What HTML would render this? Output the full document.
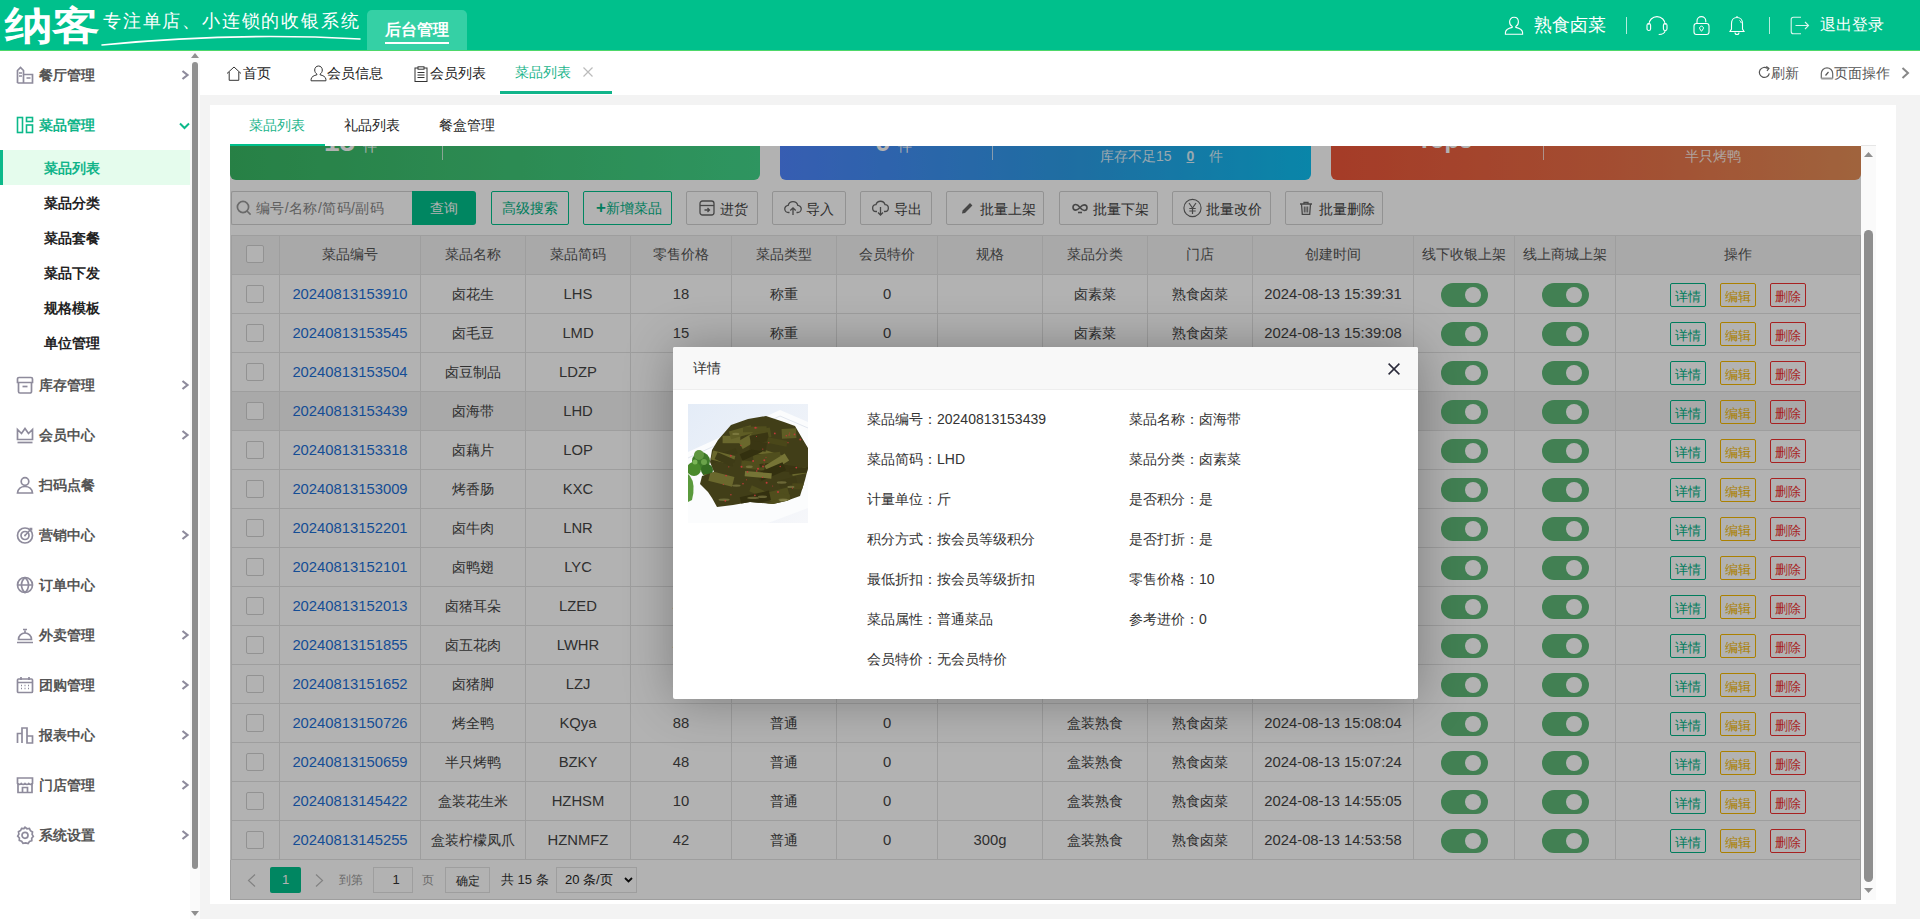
<!DOCTYPE html>
<html><head><meta charset="utf-8"><title>菜品列表</title><style>
*{box-sizing:border-box;margin:0;padding:0}
html,body{width:1920px;height:919px;overflow:hidden}
body{font-family:"Liberation Sans",sans-serif;background:#f3f3f3;position:relative;font-size:14px;color:#333}
.a{position:absolute}
svg{display:block;overflow:visible}
/* header */
#hdr{left:0;top:0;width:1920px;height:51px;background:#00c08c;border-bottom:1px solid #4ed86a}
#logo{left:5px;top:5px;font-size:42px;font-weight:900;color:#fff;letter-spacing:-1px;transform-origin:0 0;transform:scale(1.14,0.93);line-height:46px;white-space:nowrap}
#slogan{left:103px;top:9px;font-family:"Liberation Serif",serif;font-size:18px;color:#fff;letter-spacing:1.8px;white-space:nowrap;line-height:24px}
#htab{left:367px;top:10px;width:100px;height:40px;background:#35d0a5;border-radius:5px 5px 0 0}
#htab span{position:absolute;left:18px;top:10px;font-size:16px;font-weight:bold;color:#fff;line-height:20px;white-space:nowrap}
#htab i{position:absolute;left:18px;top:32px;width:64px;height:2px;background:#fff}
.ht{color:#fff;white-space:nowrap;line-height:20px}
.hsep{width:1px;height:17px;background:rgba(255,255,255,.7);top:17px}
/* sidebar */
#side{left:0;top:51px;width:190px;height:868px;background:#fff}
#strack{left:190px;top:51px;width:10px;height:868px;background:#fafafa}
#sthumb{left:192px;top:62px;width:6px;height:807px;background:#8f8f8f;border-radius:3px}
.mi{left:0;width:190px;height:50px}
.mi .ic{position:absolute;left:16px;top:16px;width:18px;height:18px}
.mi .tx{position:absolute;left:39px;top:15px;font-size:14px;font-weight:bold;color:#555;line-height:20px;white-space:nowrap}
.mi .ar{position:absolute;left:181px;top:20px;width:8px;height:10px}
.si{left:0;width:190px;height:35px}
.si .tx{position:absolute;left:44px;top:8px;font-size:14px;font-weight:bold;color:#222;line-height:20px;white-space:nowrap}
.si.on{background:#e5fced;border-left:3px solid #0cb98a}
.si.on .tx{color:#10b489;left:41px}
/* tabbar */
#tabbar{left:200px;top:51px;width:1720px;height:44px;background:#fff}
.tb1{top:63px;font-size:14px;color:#222;line-height:20px;white-space:nowrap}
/* panel */
#panel{left:210px;top:105px;width:1686px;height:799px;background:#fff}
.st{top:115px;font-size:14px;color:#222;line-height:20px;white-space:nowrap}
/* iframe */
#ifr{left:230px;top:146px;width:1646px;height:754px;background:#fff;overflow:hidden}
#rtrack{left:1631px;top:0;width:15px;height:755px;background:#fafafa}
#rthumb{left:1634px;top:85px;width:9px;height:652px;background:#8f8f8f;border-radius:5px}
.card{top:-120px;height:155px;border-radius:0 0 6px 6px;color:#fff}
.btn{top:46px;height:34px;border:1px solid #d2d2d2;background:#fff;border-radius:2px;font-size:14px;color:#555;line-height:32px;white-space:nowrap}
/* table */
.tb{position:absolute;left:1px;top:90px;border-collapse:collapse;table-layout:fixed;width:1629px}
.tb th,.tb td{border:1px solid #e2e2e2;height:39px;text-align:center;font-size:14px;color:#555;font-weight:normal;white-space:nowrap;overflow:hidden}
.tb th{background:#f2f2f2;color:#555}
.tb td{color:#444;font-size:14px;padding-top:1px}
.tb td.n,.tb td.lk,.tb td.tm{font-size:14.8px;padding-top:0}
.tb td.lk{color:#1d6fd6}
.tb tr.hov td{background:#f2f2f2}
.tb td.sc{padding:1px 0 0}
.cb{display:inline-block;width:18px;height:18px;margin-left:-2px;position:relative;top:-1px;border:1px solid #d2d2d2;background:#fff;border-radius:2px;vertical-align:middle}
.sw{display:inline-block;width:47px;height:24px;border-radius:12px;background:#5fb878;position:relative;vertical-align:middle}
.sw:after{content:"";position:absolute;right:7px;top:4px;width:16px;height:16px;border-radius:50%;background:#fff}
.op b{display:inline-block;width:36px;height:24px;border:1px solid;border-radius:2px;font-weight:normal;font-size:13px;line-height:25px;margin:0 7px;vertical-align:middle}
.bd{color:#00b386;border-color:#00c08b}
.be{color:#f5b800;border-color:#ffc200}
.bx{color:#f03030;border-color:#ff3a3a}
#pager{left:0;top:715px;width:1631px;height:40px;border:1px solid #e2e2e2;border-top:0}
#shade{left:0;top:0;width:1631px;height:755px;background:rgba(0,0,0,.3)}
/* modal */
#modal{left:673px;top:347px;width:745px;height:352px;background:#fff;border-radius:2px;box-shadow:1px 1px 50px rgba(0,0,0,.3)}
#mtitle{left:0;top:0;width:745px;height:43px;background:#f8f8f8;border-bottom:1px solid #eee;border-radius:2px 2px 0 0}
.dl{font-size:14px;color:#333;line-height:20px;white-space:nowrap}

</style></head><body>
<div id="hdr" class="a">
  <div id="logo" class="a">纳客</div>
  <div id="slogan" class="a">专注单店、小连锁的收银系统</div>
  <svg class="a" style="left:102px;top:34px" width="260" height="14"><path d="M0 11 Q 130 -2 258 5" stroke="#fff" stroke-width="1.6" fill="none" stroke-linecap="round"/></svg>
  <div id="htab" class="a"><span>后台管理</span><i></i></div>
  <svg class="a" style="left:1504px;top:16px" width="20" height="19" viewBox="0 0 20 19"><path d="M10 1.2c2.6 0 4.4 2 4.4 4.6 0 2.2-1.2 4-2.6 4.7l0 .9c3.3.7 6.6 2.4 6.8 5.2v1.6H1.4v-1.6c.2-2.8 3.5-4.5 6.8-5.2v-.9C6.8 9.8 5.6 8 5.6 5.8 5.6 3.2 7.4 1.2 10 1.2z" fill="none" stroke="#fff" stroke-width="1.1"/></svg>
  <div class="a ht" style="left:1534px;top:15px;font-size:18px">熟食卤菜</div>
  <div class="a hsep" style="left:1626px"></div>
  <svg class="a" style="left:1646px;top:16px" width="22" height="20" viewBox="0 0 22 20"><path d="M2.8 9V8.8a8.2 8.2 0 0 1 16.4 0V9" fill="none" stroke="#fff" stroke-width="1.1"/><rect x="1" y="7.5" width="3.6" height="7" rx="1.8" fill="none" stroke="#fff" stroke-width="1.1"/><rect x="17.4" y="7.5" width="3.6" height="7" rx="1.8" fill="none" stroke="#fff" stroke-width="1.1"/><path d="M19.2 14.5c-.4 2.6-2.6 4-6.5 4" fill="none" stroke="#fff" stroke-width="1.1"/></svg>
  <svg class="a" style="left:1693px;top:15px" width="17" height="21" viewBox="0 0 17 21"><path d="M4 8.5V6a4.4 4.4 0 0 1 8.8 0v1.3" fill="none" stroke="#fff" stroke-width="1.1"/><rect x="1" y="8.5" width="15" height="11" rx="2.4" fill="none" stroke="#fff" stroke-width="1.1"/><path d="M8.5 16.3l-1.7-2.4a1.9 1.9 0 1 1 3.4 0z" fill="none" stroke="#fff" stroke-width="1"/></svg>
  <svg class="a" style="left:1729px;top:15px" width="16" height="21" viewBox="0 0 16 21"><path d="M8 1v1.5M8 2.5c-3.2 0-5.5 2.6-5.5 6v5.5L1 16.5h14l-1.5-2.5V8.5c0-3.4-2.3-6-5.5-6zM6 17.5a2 2 0 0 0 4 0" fill="none" stroke="#fff" stroke-width="1.1"/><path d="M10.5 5.5c1 .6 1.6 1.6 1.8 2.6" fill="none" stroke="#fff" stroke-width="1"/></svg>
  <div class="a hsep" style="left:1769px"></div>
  <svg class="a" style="left:1790px;top:16px" width="20" height="19" viewBox="0 0 20 19"><path d="M11 1.2H3.5A2.3 2.3 0 0 0 1.2 3.5v12a2.3 2.3 0 0 0 2.3 2.3H11M5.5 9.5h13M15 6l3.5 3.5L15 13" fill="none" stroke="#fff" stroke-width="1.1" opacity=".85"/></svg>
  <div class="a ht" style="left:1820px;top:15px;font-size:16px">退出登录</div>
</div>

<!-- sidebar -->
<div id="side" class="a"></div>
<div id="strack" class="a"></div>
<svg class="a" style="left:191px;top:53px" width="8" height="5"><path d="M0 5L4 0L8 5z" fill="#8f8f8f"/></svg>
<div id="sthumb" class="a"></div>
<svg class="a" style="left:191px;top:911px" width="8" height="5"><path d="M0 0L4 5L8 0z" fill="#8f8f8f"/></svg>

<div class="a mi" style="top:50px"><svg class="ic" width="18" height="18" viewBox="0 0 18 18"><path d="M1.5 17V4.5L4.5 1.5 7.5 4.5V17" fill="none" stroke="#8e8b9c" stroke-width="1.7"/><path d="M7.5 8.5h9v8.5h-15" fill="none" stroke="#8e8b9c" stroke-width="1.7"/><path d="M3 7h3M3 10h3M10.5 12h4" fill="none" stroke="#8e8b9c" stroke-width="1.7"/></svg><span class="tx">餐厅管理</span><svg class="ar" width="8" height="10" viewBox="0 0 8 10"><path d="M1.5 1l5 4-5 4" fill="none" stroke="#8e8b9c" stroke-width="2.2"/></svg></div>
<div class="a mi" style="top:100px"><svg class="ic" width="18" height="18" viewBox="0 0 18 18"><rect x="1.5" y="1.5" width="5" height="15" stroke="#0cb98a" stroke-width="1.6" fill="none"/><rect x="10.5" y="1.5" width="6" height="4" stroke="#0cb98a" stroke-width="1.6" fill="none"/><rect x="10.5" y="9" width="6" height="7.5" stroke="#0cb98a" stroke-width="1.6" fill="none"/></svg><span class="tx" style="color:#10b489">菜品管理</span></div>
<svg class="a" style="left:179px;top:122px" width="11" height="8" viewBox="0 0 11 8"><path d="M1 1.5l4.5 4.5 4.5-4.5" fill="none" stroke="#0cb98a" stroke-width="2"/></svg>
<div class="a si on" style="top:150px"><span class="tx">菜品列表</span></div>
<div class="a si" style="top:185px"><span class="tx">菜品分类</span></div>
<div class="a si" style="top:220px"><span class="tx">菜品套餐</span></div>
<div class="a si" style="top:255px"><span class="tx">菜品下发</span></div>
<div class="a si" style="top:290px"><span class="tx">规格模板</span></div>
<div class="a si" style="top:325px"><span class="tx">单位管理</span></div>
<div class="a mi" style="top:360px"><svg class="ic" width="18" height="18" viewBox="0 0 18 18"><path d="M2.5 6.5v9a1.5 1.5 0 0 0 1.5 1.5h10a1.5 1.5 0 0 0 1.5-1.5v-9M1.5 6.5h15V3a1.5 1.5 0 0 0-1.5-1.5H3A1.5 1.5 0 0 0 1.5 3z" fill="none" stroke="#8e8b9c" stroke-width="1.7"/><path d="M6.5 10.5h5" fill="none" stroke="#8e8b9c" stroke-width="1.7"/></svg><span class="tx">库存管理</span><svg class="ar" width="8" height="10" viewBox="0 0 8 10"><path d="M1.5 1l5 4-5 4" fill="none" stroke="#8e8b9c" stroke-width="2.2"/></svg></div>
<div class="a mi" style="top:410px"><svg class="ic" width="18" height="18" viewBox="0 0 18 18"><path d="M1.5 13.5V3.5l4 4 3.5-5 3.5 5 4-4v10z" fill="none" stroke="#8e8b9c" stroke-width="1.7"/><path d="M1.5 16.5h15" fill="none" stroke="#8e8b9c" stroke-width="1.7"/></svg><span class="tx">会员中心</span><svg class="ar" width="8" height="10" viewBox="0 0 8 10"><path d="M1.5 1l5 4-5 4" fill="none" stroke="#8e8b9c" stroke-width="2.2"/></svg></div>
<div class="a mi" style="top:460px"><svg class="ic" width="18" height="18" viewBox="0 0 18 18"><circle cx="9" cy="5.5" r="3.8" fill="none" stroke="#8e8b9c" stroke-width="1.7"/><path d="M1.5 17c.4-4 3.5-6.5 7.5-6.5s7.1 2.5 7.5 6.5z" fill="none" stroke="#8e8b9c" stroke-width="1.7"/></svg><span class="tx">扫码点餐</span></div>
<div class="a mi" style="top:510px"><svg class="ic" width="18" height="18" viewBox="0 0 18 18"><circle cx="9" cy="9.5" r="7.5" fill="none" stroke="#8e8b9c" stroke-width="1.7"/><circle cx="9" cy="9.5" r="4" fill="none" stroke="#8e8b9c" stroke-width="1.7"/><circle cx="9" cy="9.5" r="1" fill="#8e8b9c"/><path d="M9 9.5l6.5-7M13.5 2.5h2v2" fill="none" stroke="#8e8b9c" stroke-width="1.7"/></svg><span class="tx">营销中心</span><svg class="ar" width="8" height="10" viewBox="0 0 8 10"><path d="M1.5 1l5 4-5 4" fill="none" stroke="#8e8b9c" stroke-width="2.2"/></svg></div>
<div class="a mi" style="top:560px"><svg class="ic" width="18" height="18" viewBox="0 0 18 18"><circle cx="9" cy="9" r="7.5" fill="none" stroke="#8e8b9c" stroke-width="1.7"/><path d="M1.5 9h15M9 1.5c-2.6 2.2-3.5 4.7-3.5 7.5s.9 5.3 3.5 7.5c2.6-2.2 3.5-4.7 3.5-7.5S11.6 3.7 9 1.5" fill="none" stroke="#8e8b9c" stroke-width="1.7"/></svg><span class="tx">订单中心</span></div>
<div class="a mi" style="top:610px"><svg class="ic" width="18" height="18" viewBox="0 0 18 18"><path d="M2.5 13.5a6.5 6.5 0 0 1 13 0z" fill="none" stroke="#8e8b9c" stroke-width="1.7"/><path d="M1 16.5h16M9 7V4.5M7 3.5h4" fill="none" stroke="#8e8b9c" stroke-width="1.7"/></svg><span class="tx">外卖管理</span><svg class="ar" width="8" height="10" viewBox="0 0 8 10"><path d="M1.5 1l5 4-5 4" fill="none" stroke="#8e8b9c" stroke-width="2.2"/></svg></div>
<div class="a mi" style="top:660px"><svg class="ic" width="18" height="18" viewBox="0 0 18 18"><rect x="1.5" y="3" width="15" height="13.5" rx="1" fill="none" stroke="#8e8b9c" stroke-width="1.7"/><path d="M5 1v3M13 1v3M1.5 6.5h15" fill="none" stroke="#8e8b9c" stroke-width="1.7"/><path d="M5 9.5h1M8.5 9.5h1M12 9.5h1M5 12.5h1M8.5 12.5h1M12 12.5h1" stroke="#8e8b9c" stroke-width="1.3"/></svg><span class="tx">团购管理</span><svg class="ar" width="8" height="10" viewBox="0 0 8 10"><path d="M1.5 1l5 4-5 4" fill="none" stroke="#8e8b9c" stroke-width="2.2"/></svg></div>
<div class="a mi" style="top:710px"><svg class="ic" width="18" height="18" viewBox="0 0 18 18"><path d="M1.5 17V7.5h4.5V17M6 17V2h5v15M11 17V10h5.5v7z" fill="none" stroke="#8e8b9c" stroke-width="1.7"/></svg><span class="tx">报表中心</span><svg class="ar" width="8" height="10" viewBox="0 0 8 10"><path d="M1.5 1l5 4-5 4" fill="none" stroke="#8e8b9c" stroke-width="2.2"/></svg></div>
<div class="a mi" style="top:760px"><svg class="ic" width="18" height="18" viewBox="0 0 18 18"><path d="M2 7v9.5h14V7" fill="none" stroke="#8e8b9c" stroke-width="1.7"/><path d="M1.5 7.5V2h15v5.5c-1 1.2-2.6 1.2-3.7 0-1 1.2-2.7 1.2-3.8 0-1 1.2-2.7 1.2-3.8 0-1 1.2-2.6 1.2-3.7 0z" fill="none" stroke="#8e8b9c" stroke-width="1.7"/><path d="M6.5 16.5v-5h5v5" fill="none" stroke="#8e8b9c" stroke-width="1.7"/></svg><span class="tx">门店管理</span><svg class="ar" width="8" height="10" viewBox="0 0 8 10"><path d="M1.5 1l5 4-5 4" fill="none" stroke="#8e8b9c" stroke-width="2.2"/></svg></div>
<div class="a mi" style="top:810px"><svg class="ic" width="18" height="18" viewBox="0 0 18 18"><path d="M9 1.3l2 1.5 2.4-.3 1 2.2 2.1 1.2-.4 2.4 1.2 2.1-1.6 1.8.1 2.5-2.3.8-1.4 2-2.3-.6L7 17.3l-1.4-2-2.3-.8.1-2.5L1.7 10.2l1.2-2.1-.4-2.4 2.1-1.2 1-2.2 2.4.3z" fill="none" stroke="#8e8b9c" stroke-width="1.7"/><circle cx="9" cy="9.3" r="3" fill="none" stroke="#8e8b9c" stroke-width="1.7"/></svg><span class="tx">系统设置</span><svg class="ar" width="8" height="10" viewBox="0 0 8 10"><path d="M1.5 1l5 4-5 4" fill="none" stroke="#8e8b9c" stroke-width="2.2"/></svg></div>

<!-- tab bar -->
<div id="tabbar" class="a"></div>
<svg class="a" style="left:226px;top:66px" width="16" height="15" viewBox="0 0 16 15"><path d="M1 7.5L8 1l7 6.5M3.2 6v8.3h9.6V6" fill="none" stroke="#333" stroke-width="1"/></svg>
<div class="a tb1" style="left:243px">首页</div>
<svg class="a" style="left:310px;top:65px" width="17" height="17" viewBox="0 0 17 17"><path d="M8.5 1c2.3 0 3.8 1.8 3.8 4 0 1.9-1 3.4-2.2 4v.8c2.8.6 5.6 2 5.8 4.4v1.6H1.1v-1.6c.2-2.4 3-3.8 5.8-4.4V9C5.7 8.4 4.7 6.9 4.7 5c0-2.2 1.5-4 3.8-4z" fill="none" stroke="#333" stroke-width="1"/></svg>
<div class="a tb1" style="left:327px">会员信息</div>
<svg class="a" style="left:414px;top:66px" width="14" height="16" viewBox="0 0 14 16"><rect x="1" y="2" width="12" height="13.5" fill="none" stroke="#333" stroke-width="1"/><rect x="4" y=".8" width="6" height="2.4" fill="#fff" stroke="#333" stroke-width="1"/><path d="M3.5 6.5h7M3.5 9h7M3.5 11.5h7" stroke="#333" stroke-width="1"/></svg>
<div class="a tb1" style="left:430px">会员列表</div>
<div class="a tb1" style="left:515px;top:62px;color:#1cb58c">菜品列表</div>
<svg class="a" style="left:583px;top:67px" width="10" height="10"><path d="M.5 .5l9 9M9.5 .5l-9 9" stroke="#bbb" stroke-width="1.2"/></svg>
<div class="a" style="left:500px;top:91px;width:112px;height:3px;background:#10b48a"></div>
<svg class="a" style="left:1758px;top:66px" width="13" height="13" viewBox="0 0 13 13"><path d="M11.3 7.3A5 5 0 1 1 9.6 2.6" fill="none" stroke="#555" stroke-width="1.2"/><path d="M8.3 .6l2.6 1.8-1.9 2.5" fill="none" stroke="#555" stroke-width="1.2"/></svg>
<div class="a tb1" style="left:1771px;color:#555">刷新</div>
<svg class="a" style="left:1820px;top:66px" width="14" height="14" viewBox="0 0 14 14"><path d="M1.3 12.5V7.5a5.7 5.7 0 0 1 11.4 0v5" fill="none" stroke="#666" stroke-width="1.2"/><path d="M1.3 12.5h11.4" stroke="#999" stroke-width="2"/><path d="M5.5 9.5l3-3.5" stroke="#555" stroke-width="1.2"/></svg>
<div class="a tb1" style="left:1834px;color:#555">页面操作</div>
<svg class="a" style="left:1901px;top:67px" width="9" height="12"><path d="M1.5 1l5.5 5-5.5 5" fill="none" stroke="#888" stroke-width="2"/></svg>

<!-- panel -->
<div id="panel" class="a"></div>
<div class="a st" style="left:249px;color:#1cb58c">菜品列表</div>
<div class="a st" style="left:344px">礼品列表</div>
<div class="a st" style="left:439px">餐盒管理</div>

<div id="ifr" class="a"><div class="a" style="left:0;top:-1px;width:1646px;height:755px">
  <div class="a card" style="left:0;width:530px;background:linear-gradient(90deg,#39b864,#40c878 55%,#42d68a)"></div>
<div class="a card" style="left:550px;width:531px;background:linear-gradient(90deg,#4f86ff,#2c9ee8 55%,#0ec0f2)"></div>
<div class="a card" style="left:1101px;width:530px;background:linear-gradient(90deg,#ec5639,#ea7048 55%,#e58f58)"></div>
<div class="a" style="left:212px;top:-10px;width:1px;height:25px;background:rgba(255,255,255,.7)"></div>
<div class="a" style="left:762px;top:-10px;width:1px;height:25px;background:rgba(255,255,255,.7)"></div>
<div class="a" style="left:1313px;top:-10px;width:1px;height:25px;background:rgba(255,255,255,.7)"></div>
<div class="a" style="left:94px;top:-18px;font-size:28px;font-weight:bold;color:#fff;line-height:30px;white-space:nowrap">15 <span style="font-size:14px;font-weight:normal">件</span></div>
<div class="a" style="left:645px;top:-18px;font-size:28px;font-weight:bold;color:#fff;line-height:30px;white-space:nowrap">0 <span style="font-size:14px;font-weight:normal">件</span></div>
<div class="a" style="left:1187px;top:-20px;font-size:24px;font-weight:bold;color:#fff;line-height:30px;white-space:nowrap">Top5</div>
<div class="a" style="left:870px;top:1px;font-size:14px;color:rgba(255,255,255,.85);line-height:20px;white-space:nowrap">库存不足15 <span style="text-decoration:underline;display:inline-block;width:30px;text-align:center;font-weight:bold">0</span> 件</div>
<div class="a" style="left:1455px;top:1px;font-size:14px;color:rgba(255,255,255,.85);line-height:20px;white-space:nowrap">半只烤鸭</div>
<div class="a" style="left:1px;top:46px;width:182px;height:34px;border:1px solid #d2d2d2;border-right:0;border-radius:2px 0 0 2px;background:#fff"></div>
<svg class="a" style="left:6px;top:55px" width="16" height="16" viewBox="0 0 16 16"><circle cx="7" cy="7" r="5.6" fill="none" stroke="#999" stroke-width="1.7"/><path d="M11 11l3.6 3.6" stroke="#999" stroke-width="1.6"/></svg>
<div class="a" style="left:26px;top:53px;font-size:14px;color:#888;line-height:20px;white-space:nowrap;letter-spacing:.4px">编号/名称/简码/副码</div>
<div class="a" style="left:182px;top:46px;width:64px;height:34px;background:#00c08b;border-radius:0 3px 3px 0;color:#fff;font-size:14px;line-height:34px;text-align:center">查询</div>
<div class="a btn" style="left:261px;width:78px;border-color:#00c08b;color:#00b386;text-align:center;">高级搜索</div>
<div class="a btn" style="left:353px;width:89px;border-color:#00c08b;color:#00b386;text-align:center;"><span style="position:absolute;left:12px;top:0;font-weight:bold;font-size:17px">+</span><span style="position:absolute;left:22px;top:0">新增菜品</span></div>
<div class="a btn" style="left:456px;width:72px;"><span style="position:absolute;left:12px;top:50%;transform:translateY(-50%)"><svg width="16" height="16" viewBox="0 0 16 16"><rect x="1" y="1" width="14" height="14" rx="2.5" fill="none" stroke="#666" stroke-width="1.3"/><path d="M1 5.5h14" fill="none" stroke="#666" stroke-width="1.3"/><path d="M5.5 10h5M8.5 8l2 2-2 2" fill="none" stroke="#666" stroke-width="1.3"/></svg></span><span style="position:absolute;left:33px;top:1px;color:#444">进货</span></div>
<div class="a btn" style="left:542px;width:74px;"><span style="position:absolute;left:11px;top:50%;transform:translateY(-50%)"><svg width="18" height="16" viewBox="0 0 18 16"><path d="M5.5 12.5H4.5A3.6 3.6 0 0 1 4.2 5.3 5 5 0 0 1 13.8 5.3a3.6 3.6 0 0 1-.3 7.2h-1" fill="none" stroke="#666" stroke-width="1.3"/><path d="M9 15V8M6.3 10.5L9 7.8l2.7 2.7" fill="none" stroke="#666" stroke-width="1.3"/></svg></span><span style="position:absolute;left:33px;top:1px;color:#444">导入</span></div>
<div class="a btn" style="left:630px;width:72px;"><span style="position:absolute;left:11px;top:50%;transform:translateY(-50%)"><svg width="17" height="16" viewBox="0 0 17 16"><path d="M5 11.5H4.2A3.4 3.4 0 0 1 3.9 4.7 4.8 4.8 0 0 1 13.1 4.7a3.4 3.4 0 0 1-.3 6.8H12" fill="none" stroke="#666" stroke-width="1.3"/><path d="M8.5 7v8M6 12.5l2.5 2.5 2.5-2.5" fill="none" stroke="#666" stroke-width="1.3"/></svg></span><span style="position:absolute;left:33px;top:1px;color:#444">导出</span></div>
<div class="a btn" style="left:716px;width:98px;"><span style="position:absolute;left:14px;top:50%;transform:translateY(-50%)"><svg width="13" height="13" viewBox="0 0 13 13"><path d="M1 12l.6-3L9 1.6 11.4 4 4 11.4z" fill="#666"/></svg></span><span style="position:absolute;left:33px;top:1px;color:#444">批量上架</span></div>
<div class="a btn" style="left:829px;width:99px;"><span style="position:absolute;left:12px;top:50%;transform:translateY(-50%)"><svg width="16" height="12" viewBox="0 0 16 12"><path d="M8 5.5C6.5 3.5 5.3 2.5 3.8 2.5a2.8 2.8 0 0 0 0 5.6c1.5 0 2.7-1 4.2-2.6 1.5-1.6 2.7-2.6 4.2-2.6a2.8 2.8 0 0 1 0 5.6c-1.5 0-2.7-1-4.2-3" fill="none" stroke="#666" stroke-width="1.6"/><path d="M6 10.5h4" stroke="#666" stroke-width="1.6"/></svg></span><span style="position:absolute;left:33px;top:1px;color:#444">批量下架</span></div>
<div class="a btn" style="left:942px;width:99px;"><span style="position:absolute;left:10px;top:50%;transform:translateY(-50%)"><svg width="19" height="19" viewBox="0 0 19 19"><circle cx="9.5" cy="9.5" r="8.6" fill="none" stroke="#666" stroke-width="1.1"/><path d="M6 4.5l3.5 5 3.5-5M9.5 9.5v6M6.3 10h6.4M6.3 12.5h6.4" fill="none" stroke="#666" stroke-width="1.2"/></svg></span><span style="position:absolute;left:33px;top:1px;color:#444">批量改价</span></div>
<div class="a btn" style="left:1055px;width:98px;"><span style="position:absolute;left:13px;top:50%;transform:translateY(-50%)"><svg width="14" height="14" viewBox="0 0 14 14"><path d="M1 3h12M5 3V1.3h4V3M2.5 3l.8 10.3h7.4L11.5 3" fill="none" stroke="#666" stroke-width="1.3"/><path d="M5.3 5.5v6M7 5.5v6M8.7 5.5v6" stroke="#666" stroke-width="1"/></svg></span><span style="position:absolute;left:33px;top:1px;color:#444">批量删除</span></div>
<table class="tb"><colgroup><col style="width:48px"><col style="width:141px"><col style="width:105px"><col style="width:105px"><col style="width:101px"><col style="width:105px"><col style="width:101px"><col style="width:105px"><col style="width:105px"><col style="width:105px"><col style="width:161px"><col style="width:101px"><col style="width:101px"><col style="width:245px"></colgroup><thead><tr><th><i class="cb"></i></th><th>菜品编号</th><th>菜品名称</th><th>菜品简码</th><th>零售价格</th><th>菜品类型</th><th>会员特价</th><th>规格</th><th>菜品分类</th><th>门店</th><th>创建时间</th><th>线下收银上架</th><th>线上商城上架</th><th>操作</th></tr></thead><tbody><tr><td><i class="cb"></i></td><td class="lk">20240813153910</td><td>卤花生</td><td class="n">LHS</td><td class="n">18</td><td>称重</td><td class="n">0</td><td></td><td>卤素菜</td><td>熟食卤菜</td><td class="tm">2024-08-13 15:39:31</td><td class="sc"><i class="sw"></i></td><td class="sc"><i class="sw"></i></td><td class="op sc"><b class="bd">详情</b><b class="be">编辑</b><b class="bx">删除</b></td></tr><tr><td><i class="cb"></i></td><td class="lk">20240813153545</td><td>卤毛豆</td><td class="n">LMD</td><td class="n">15</td><td>称重</td><td class="n">0</td><td></td><td>卤素菜</td><td>熟食卤菜</td><td class="tm">2024-08-13 15:39:08</td><td class="sc"><i class="sw"></i></td><td class="sc"><i class="sw"></i></td><td class="op sc"><b class="bd">详情</b><b class="be">编辑</b><b class="bx">删除</b></td></tr><tr><td><i class="cb"></i></td><td class="lk">20240813153504</td><td>卤豆制品</td><td class="n">LDZP</td><td class="n">20</td><td>称重</td><td class="n">0</td><td></td><td>卤素菜</td><td>熟食卤菜</td><td class="tm">2024-08-13 15:35:04</td><td class="sc"><i class="sw"></i></td><td class="sc"><i class="sw"></i></td><td class="op sc"><b class="bd">详情</b><b class="be">编辑</b><b class="bx">删除</b></td></tr><tr class="hov"><td><i class="cb"></i></td><td class="lk">20240813153439</td><td>卤海带</td><td class="n">LHD</td><td class="n">10</td><td>称重</td><td class="n">0</td><td></td><td>卤素菜</td><td>熟食卤菜</td><td class="tm">2024-08-13 15:34:39</td><td class="sc"><i class="sw"></i></td><td class="sc"><i class="sw"></i></td><td class="op sc"><b class="bd">详情</b><b class="be">编辑</b><b class="bx">删除</b></td></tr><tr><td><i class="cb"></i></td><td class="lk">20240813153318</td><td>卤藕片</td><td class="n">LOP</td><td class="n">16</td><td>称重</td><td class="n">0</td><td></td><td>卤素菜</td><td>熟食卤菜</td><td class="tm">2024-08-13 15:33:18</td><td class="sc"><i class="sw"></i></td><td class="sc"><i class="sw"></i></td><td class="op sc"><b class="bd">详情</b><b class="be">编辑</b><b class="bx">删除</b></td></tr><tr><td><i class="cb"></i></td><td class="lk">20240813153009</td><td>烤香肠</td><td class="n">KXC</td><td class="n">30</td><td>称重</td><td class="n">0</td><td></td><td>烤制品</td><td>熟食卤菜</td><td class="tm">2024-08-13 15:30:09</td><td class="sc"><i class="sw"></i></td><td class="sc"><i class="sw"></i></td><td class="op sc"><b class="bd">详情</b><b class="be">编辑</b><b class="bx">删除</b></td></tr><tr><td><i class="cb"></i></td><td class="lk">20240813152201</td><td>卤牛肉</td><td class="n">LNR</td><td class="n">68</td><td>称重</td><td class="n">0</td><td></td><td>卤荤菜</td><td>熟食卤菜</td><td class="tm">2024-08-13 15:22:01</td><td class="sc"><i class="sw"></i></td><td class="sc"><i class="sw"></i></td><td class="op sc"><b class="bd">详情</b><b class="be">编辑</b><b class="bx">删除</b></td></tr><tr><td><i class="cb"></i></td><td class="lk">20240813152101</td><td>卤鸭翅</td><td class="n">LYC</td><td class="n">32</td><td>称重</td><td class="n">0</td><td></td><td>卤荤菜</td><td>熟食卤菜</td><td class="tm">2024-08-13 15:21:01</td><td class="sc"><i class="sw"></i></td><td class="sc"><i class="sw"></i></td><td class="op sc"><b class="bd">详情</b><b class="be">编辑</b><b class="bx">删除</b></td></tr><tr><td><i class="cb"></i></td><td class="lk">20240813152013</td><td>卤猪耳朵</td><td class="n">LZED</td><td class="n">45</td><td>称重</td><td class="n">0</td><td></td><td>卤荤菜</td><td>熟食卤菜</td><td class="tm">2024-08-13 15:20:13</td><td class="sc"><i class="sw"></i></td><td class="sc"><i class="sw"></i></td><td class="op sc"><b class="bd">详情</b><b class="be">编辑</b><b class="bx">删除</b></td></tr><tr><td><i class="cb"></i></td><td class="lk">20240813151855</td><td>卤五花肉</td><td class="n">LWHR</td><td class="n">40</td><td>称重</td><td class="n">0</td><td></td><td>卤荤菜</td><td>熟食卤菜</td><td class="tm">2024-08-13 15:18:55</td><td class="sc"><i class="sw"></i></td><td class="sc"><i class="sw"></i></td><td class="op sc"><b class="bd">详情</b><b class="be">编辑</b><b class="bx">删除</b></td></tr><tr><td><i class="cb"></i></td><td class="lk">20240813151652</td><td>卤猪脚</td><td class="n">LZJ</td><td class="n">38</td><td>称重</td><td class="n">0</td><td></td><td>卤荤菜</td><td>熟食卤菜</td><td class="tm">2024-08-13 15:16:52</td><td class="sc"><i class="sw"></i></td><td class="sc"><i class="sw"></i></td><td class="op sc"><b class="bd">详情</b><b class="be">编辑</b><b class="bx">删除</b></td></tr><tr><td><i class="cb"></i></td><td class="lk">20240813150726</td><td>烤全鸭</td><td class="n">KQya</td><td class="n">88</td><td>普通</td><td class="n">0</td><td></td><td>盒装熟食</td><td>熟食卤菜</td><td class="tm">2024-08-13 15:08:04</td><td class="sc"><i class="sw"></i></td><td class="sc"><i class="sw"></i></td><td class="op sc"><b class="bd">详情</b><b class="be">编辑</b><b class="bx">删除</b></td></tr><tr><td><i class="cb"></i></td><td class="lk">20240813150659</td><td>半只烤鸭</td><td class="n">BZKY</td><td class="n">48</td><td>普通</td><td class="n">0</td><td></td><td>盒装熟食</td><td>熟食卤菜</td><td class="tm">2024-08-13 15:07:24</td><td class="sc"><i class="sw"></i></td><td class="sc"><i class="sw"></i></td><td class="op sc"><b class="bd">详情</b><b class="be">编辑</b><b class="bx">删除</b></td></tr><tr><td><i class="cb"></i></td><td class="lk">20240813145422</td><td>盒装花生米</td><td class="n">HZHSM</td><td class="n">10</td><td>普通</td><td class="n">0</td><td></td><td>盒装熟食</td><td>熟食卤菜</td><td class="tm">2024-08-13 14:55:05</td><td class="sc"><i class="sw"></i></td><td class="sc"><i class="sw"></i></td><td class="op sc"><b class="bd">详情</b><b class="be">编辑</b><b class="bx">删除</b></td></tr><tr><td><i class="cb"></i></td><td class="lk">20240813145255</td><td>盒装柠檬凤爪</td><td class="n">HZNMFZ</td><td class="n">42</td><td>普通</td><td class="n">0</td><td class="n">300g</td><td>盒装熟食</td><td>熟食卤菜</td><td class="tm">2024-08-13 14:53:58</td><td class="sc"><i class="sw"></i></td><td class="sc"><i class="sw"></i></td><td class="op sc"><b class="bd">详情</b><b class="be">编辑</b><b class="bx">删除</b></td></tr></tbody></table>
<div id="pager" class="a"></div>
<svg class="a" style="left:17px;top:729px" width="9" height="13"><path d="M8 .5L1.5 6.5 8 12.5" fill="none" stroke="#bbb" stroke-width="1.2"/></svg>
<div class="a" style="left:40px;top:722px;width:31px;height:26px;background:#00c08b;border-radius:2px;color:#fff;font-size:13px;line-height:26px;text-align:center">1</div>
<svg class="a" style="left:85px;top:729px" width="9" height="13"><path d="M1 .5L7.5 6.5 1 12.5" fill="none" stroke="#bbb" stroke-width="1.2"/></svg>
<div class="a" style="left:109px;top:726px;font-size:12px;color:#999;line-height:18px">到第</div>
<div class="a" style="left:143px;top:722px;width:40px;height:26px;border:1px solid #e2e2e2;background:#fff;font-size:13px;line-height:24px;text-align:center;padding-left:6px;color:#333">1</div>
<div class="a" style="left:192px;top:726px;font-size:12px;color:#999;line-height:18px">页</div>
<div class="a" style="left:215px;top:722px;width:45px;height:26px;border:1px solid #e2e2e2;background:#fff;font-size:12px;line-height:26px;text-align:center;color:#333">确定</div>
<div class="a" style="left:271px;top:725px;font-size:13px;color:#333;line-height:20px;white-space:nowrap">共 15 条</div>
<div class="a" style="left:326px;top:722px;width:81px;height:26px;border:1px solid #e2e2e2;background:#fff;font-size:13px;line-height:24px;color:#222;padding-left:8px;white-space:nowrap">20 条/页</div>
<svg class="a" style="left:394px;top:732px" width="9" height="6"><path d="M1 1l3.5 3.5L8 1" fill="none" stroke="#111" stroke-width="1.8"/></svg>
<div id="shade" class="a"></div>
<div id="rtrack" class="a"></div>
<svg class="a" style="left:1634px;top:7px" width="9" height="5"><path d="M0 5L4.5 0L9 5z" fill="#8f8f8f"/></svg>
<div id="rthumb" class="a"></div>
<svg class="a" style="left:1634px;top:743px" width="9" height="5"><path d="M0 0L4.5 5L9 0z" fill="#8f8f8f"/></svg>
</div></div>
<div class="a" style="left:1861px;top:145px;width:15px;height:1px;background:#e6e6e6"></div>
<div class="a" style="left:230px;top:144px;width:95px;height:2px;background:#00c08b"></div>

<div id="modal" class="a">
<div id="mtitle" class="a"></div>
<div class="a dl" style="left:20px;top:11px">详情</div>
<svg class="a" style="left:715px;top:16px" width="12" height="12"><path d="M.6 .6l10.8 10.8M11.4 .6L.6 11.4" stroke="#2a2a3a" stroke-width="1.5"/></svg>
<svg class="a" style="left:15px;top:57px;overflow:hidden" width="120" height="119" viewBox="0 0 120 119">
<defs><linearGradient id="fbg" x1="0" y1="0" x2="1" y2="1"><stop offset="0" stop-color="#e4ecf7"/><stop offset="1" stop-color="#f6f7fa"/></linearGradient>
<clipPath id="pile"><path d="M43 21 L60 15 L78 12 L96 18 L107 22 L114 34 L120 44 L120 64 L117 76 L112 92 L98 97 L85 100 L62 98 L45 101 L29 103 L24 94 L20 88 L12 80 L14 72 L26 68 L22 58 L24 46 L30 36z"/></clipPath></defs>
<rect width="120" height="119" fill="url(#fbg)"/>
<path d="M0 48 L92 6 L120 18 L120 104 L80 119 L0 119z" fill="#fbfcfd"/>
<path d="M0 54 L92 12 L120 24" fill="none" stroke="#e1e6ee" stroke-width="1"/>
<path d="M2 72 Q8 80 4 96 L0 98 L0 70z" fill="#5a9a3c"/>
<circle cx="13" cy="57" r="9" fill="#3f7a2a"/><circle cx="6" cy="65" r="7" fill="#4a8a2c"/><circle cx="19" cy="66" r="6" fill="#356d22"/><circle cx="11" cy="51" r="5" fill="#5f9640"/><circle cx="16" cy="58" r="3" fill="#6aa34a"/><circle cx="7" cy="58" r="2.5" fill="#7ab556"/>
<path d="M16 70 L30 73 L24 80z" fill="#c77a3a" opacity=".5"/>
<g clip-path="url(#pile)"><rect width="120" height="119" fill="#413e18"/><rect x="44.3" y="26.0" width="24.4" height="5.4" fill="#4a4719" transform="rotate(-3 56.5 28.7)"/><rect x="70.6" y="89.7" width="17.4" height="5.4" fill="#33300f" transform="rotate(-10 79.3 92.4)"/><rect x="22.4" y="48.9" width="27.2" height="5.6" fill="#3e3b16" transform="rotate(-22 36.0 51.7)"/><rect x="64.0" y="46.7" width="29.6" height="5.2" fill="#6a682d" transform="rotate(17 78.8 49.3)"/><rect x="53.3" y="57.5" width="23.1" height="7.8" fill="#504e1d" transform="rotate(6 64.9 61.4)"/><rect x="69.2" y="65.8" width="20.0" height="7.7" fill="#3e3b16" transform="rotate(-31 79.2 69.7)"/><rect x="71.2" y="53.3" width="22.5" height="8.9" fill="#3a3613" transform="rotate(-7 82.5 57.7)"/><rect x="51.4" y="32.4" width="16.9" height="8.9" fill="#6a682d" transform="rotate(-30 59.8 36.9)"/><rect x="61.4" y="86.3" width="25.7" height="6.4" fill="#504e1d" transform="rotate(24 74.2 89.5)"/><rect x="63.3" y="25.0" width="19.5" height="9.7" fill="#504e1d" transform="rotate(-10 73.1 29.9)"/><rect x="81.3" y="60.8" width="28.0" height="6.6" fill="#3a3613" transform="rotate(7 95.3 64.1)"/><rect x="65.3" y="49.5" width="27.4" height="9.7" fill="#504e1d" transform="rotate(-7 79.0 54.3)"/><rect x="21.2" y="69.9" width="24.4" height="10.0" fill="#6a682d" transform="rotate(14 33.3 74.9)"/><rect x="81.3" y="85.7" width="19.6" height="9.7" fill="#504e1d" transform="rotate(-14 91.1 90.5)"/><rect x="62.1" y="30.0" width="18.6" height="8.7" fill="#3a3613" transform="rotate(-11 71.4 34.3)"/><rect x="23.7" y="49.0" width="22.8" height="9.4" fill="#6a682d" transform="rotate(14 35.1 53.7)"/><rect x="77.7" y="95.4" width="24.9" height="6.9" fill="#504e1d" transform="rotate(-21 90.2 98.9)"/><rect x="34.6" y="31.8" width="17.7" height="7.4" fill="#6a682d" transform="rotate(0 43.5 35.5)"/><rect x="41.5" y="24.2" width="22.6" height="8.0" fill="#5f5d25" transform="rotate(-16 52.8 28.2)"/><rect x="76.8" y="55.1" width="23.9" height="8.4" fill="#767436" transform="rotate(-32 88.8 59.3)"/><rect x="52.2" y="45.6" width="21.7" height="7.0" fill="#33300f" transform="rotate(-24 63.0 49.1)"/><rect x="55.0" y="22.5" width="23.6" height="5.5" fill="#504e1d" transform="rotate(-1 66.8 25.2)"/><rect x="103.9" y="64.5" width="15.1" height="6.0" fill="#6a682d" transform="rotate(-12 111.5 67.6)"/><rect x="101.3" y="63.8" width="21.6" height="5.6" fill="#3a3613" transform="rotate(-6 112.1 66.6)"/><rect x="62.1" y="37.8" width="16.3" height="8.7" fill="#3a3613" transform="rotate(9 70.3 42.2)"/><rect x="93.8" y="24.7" width="14.4" height="9.8" fill="#5f5d25" transform="rotate(-3 100.9 29.6)"/><rect x="75.7" y="89.5" width="26.1" height="6.5" fill="#504e1d" transform="rotate(4 88.7 92.8)"/><rect x="79.3" y="35.0" width="19.9" height="5.8" fill="#4a4719" transform="rotate(11 89.3 37.9)"/><rect x="70.7" y="63.1" width="26.6" height="8.8" fill="#33300f" transform="rotate(-23 84.0 67.5)"/><rect x="91.2" y="74.4" width="17.6" height="7.6" fill="#3e3b16" transform="rotate(-14 100.0 78.1)"/><rect x="104.3" y="79.4" width="21.6" height="6.0" fill="#4a4719" transform="rotate(1 115.1 82.4)"/><rect x="52.5" y="89.8" width="29.8" height="9.8" fill="#33300f" transform="rotate(-13 67.4 94.7)"/><rect x="27.3" y="51.8" width="19.4" height="7.4" fill="#3e3b16" transform="rotate(24 37.0 55.5)"/><rect x="56.8" y="68.1" width="26.8" height="5.4" fill="#767436" transform="rotate(5 70.2 70.9)"/><ellipse cx="93.7" cy="78.5" rx="4.9" ry="1.2" fill="#8f8d52" opacity=".55"/><ellipse cx="48.4" cy="81.6" rx="4.3" ry="1.2" fill="#8f8d52" opacity=".55"/><ellipse cx="95.1" cy="95.8" rx="4.6" ry="1.2" fill="#8f8d52" opacity=".55"/><ellipse cx="65.1" cy="93.9" rx="5.9" ry="1.2" fill="#8f8d52" opacity=".55"/><ellipse cx="47.8" cy="29.9" rx="3.6" ry="1.2" fill="#8f8d52" opacity=".55"/><ellipse cx="102.9" cy="82.9" rx="3.6" ry="1.2" fill="#8f8d52" opacity=".55"/><ellipse cx="97.0" cy="96.5" rx="5.6" ry="1.2" fill="#8f8d52" opacity=".55"/><ellipse cx="61.3" cy="62.8" rx="3.5" ry="1.2" fill="#8f8d52" opacity=".55"/><ellipse cx="36.1" cy="95.7" rx="5.6" ry="1.2" fill="#8f8d52" opacity=".55"/><ellipse cx="74.5" cy="92.8" rx="4.7" ry="1.2" fill="#8f8d52" opacity=".55"/><circle cx="104.4" cy="84.1" r="0.6" fill="#c23a3a"/><circle cx="52.9" cy="41.4" r="0.6" fill="#c23a3a"/><circle cx="80.7" cy="38.7" r="0.7" fill="#c23a3a"/><circle cx="42.9" cy="90.8" r="0.7" fill="#c23a3a"/><circle cx="70.0" cy="64.7" r="1.0" fill="#c23a3a"/><circle cx="66.9" cy="91.4" r="0.8" fill="#c23a3a"/><circle cx="76.1" cy="59.9" r="0.5" fill="#c23a3a"/><circle cx="68.5" cy="32.6" r="0.5" fill="#c23a3a"/><circle cx="98.3" cy="31.8" r="0.7" fill="#c23a3a"/><circle cx="92.2" cy="62.5" r="0.7" fill="#c23a3a"/><circle cx="75.0" cy="62.4" r="0.9" fill="#c23a3a"/><circle cx="40.8" cy="62.8" r="0.6" fill="#c23a3a"/><circle cx="55.0" cy="79.8" r="0.8" fill="#c23a3a"/><circle cx="78.6" cy="78.8" r="1.0" fill="#c23a3a"/><circle cx="68.8" cy="67.0" r="0.8" fill="#c23a3a"/><circle cx="74.5" cy="73.4" r="0.7" fill="#c23a3a"/><circle cx="76.3" cy="56.2" r="1.0" fill="#c23a3a"/><circle cx="90.0" cy="88.1" r="1.0" fill="#c23a3a"/><circle cx="53.5" cy="62.8" r="1.0" fill="#c23a3a"/><circle cx="101.7" cy="29.0" r="0.6" fill="#c23a3a"/><circle cx="68.7" cy="23.8" r="0.6" fill="#c23a3a"/><circle cx="38.1" cy="71.6" r="0.9" fill="#c23a3a"/><circle cx="106.5" cy="30.4" r="0.9" fill="#c23a3a"/><circle cx="86.8" cy="29.4" r="0.9" fill="#c23a3a"/><circle cx="112.3" cy="35.6" r="1.0" fill="#c23a3a"/><circle cx="65.1" cy="57.0" r="1.0" fill="#c23a3a"/><circle cx="101.1" cy="30.9" r="0.7" fill="#c23a3a"/><circle cx="74.8" cy="45.1" r="0.6" fill="#c23a3a"/><circle cx="58.4" cy="75.8" r="0.5" fill="#c23a3a"/><circle cx="78.0" cy="53.2" r="0.5" fill="#c23a3a"/><circle cx="59.5" cy="67.9" r="0.8" fill="#c23a3a"/><circle cx="37.3" cy="96.8" r="0.9" fill="#c23a3a"/><circle cx="112.7" cy="26.4" r="0.6" fill="#c23a3a"/><circle cx="35.3" cy="80.3" r="0.6" fill="#c23a3a"/><circle cx="42.8" cy="51.8" r="1.0" fill="#c23a3a"/><circle cx="100.0" cy="38.7" r="0.6" fill="#c23a3a"/><circle cx="108.3" cy="63.6" r="0.9" fill="#c23a3a"/><circle cx="39.4" cy="22.6" r="0.8" fill="#c23a3a"/><circle cx="67.3" cy="23.8" r="1.0" fill="#c23a3a"/><circle cx="84.7" cy="82.1" r="0.5" fill="#c23a3a"/></g>
</svg>
<div class="a dl" style="left:194px;top:62px">菜品编号：20240813153439</div>
<div class="a dl" style="left:194px;top:102px">菜品简码：LHD</div>
<div class="a dl" style="left:194px;top:142px">计量单位：斤</div>
<div class="a dl" style="left:194px;top:182px">积分方式：按会员等级积分</div>
<div class="a dl" style="left:194px;top:222px">最低折扣：按会员等级折扣</div>
<div class="a dl" style="left:194px;top:262px">菜品属性：普通菜品</div>
<div class="a dl" style="left:194px;top:302px">会员特价：无会员特价</div>
<div class="a dl" style="left:456px;top:62px">菜品名称：卤海带</div>
<div class="a dl" style="left:456px;top:102px">菜品分类：卤素菜</div>
<div class="a dl" style="left:456px;top:142px">是否积分：是</div>
<div class="a dl" style="left:456px;top:182px">是否打折：是</div>
<div class="a dl" style="left:456px;top:222px">零售价格：10</div>
<div class="a dl" style="left:456px;top:262px">参考进价：0</div>
</div>

</body></html>
